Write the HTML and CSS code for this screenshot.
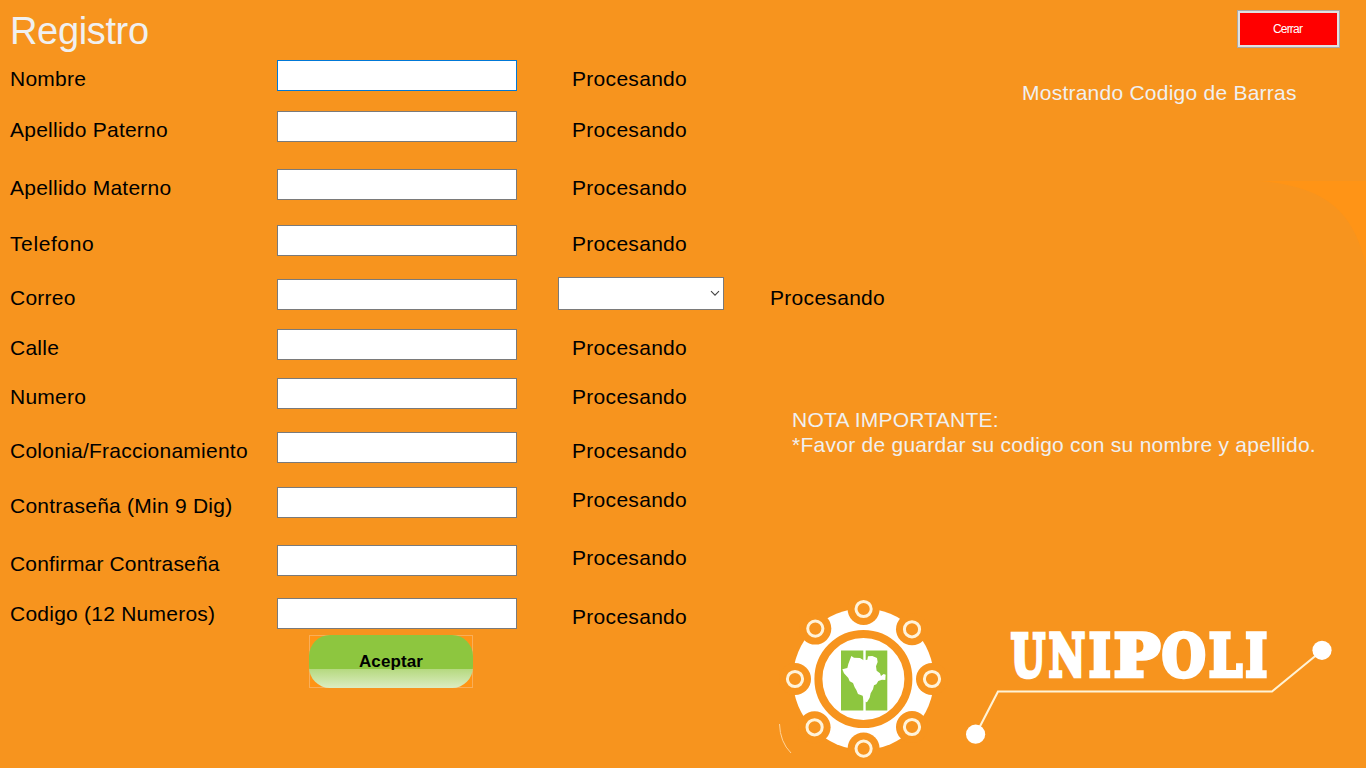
FILE: index.html
```html
<!DOCTYPE html>
<html lang="es">
<head>
<meta charset="utf-8">
<title>Registro</title>
<link rel="stylesheet" href="styles.css">
</head>
<body>
<main class="page">
  <form class="form">
    <h1 class="title">Registro</h1>
    <div class="row h51"><label>Nombre</label><input class="field focused" type="text"><span class="status">Procesando</span></div>
    <div class="row h58"><label>Apellido Paterno</label><input class="field" type="text"><span class="status">Procesando</span></div>
    <div class="row h56"><label>Apellido Materno</label><input class="field" type="text"><span class="status">Procesando</span></div>
    <div class="row h54"><label class="wide">Telefono</label><input class="field" type="text"><span class="status">Procesando</span></div>
    <div class="row h50"><label>Correo</label><input class="field" type="text">
      <div class="combo"><svg width="10" height="7" viewBox="0 0 10 7"><path d="M1 1.2l4 4 4-4" fill="none" stroke="#444" stroke-width="1.1"/></svg></div>
      <span class="status mail">Procesando</span></div>
    <div class="row h49"><label>Calle</label><input class="field" type="text"><span class="status">Procesando</span></div>
    <div class="row h54"><label>Numero</label><input class="field" type="text"><span class="status">Procesando</span></div>
    <div class="row h55"><label>Colonia/Fraccionamiento</label><input class="field" type="text"><span class="status">Procesando</span></div>
    <div class="row h58"><label>Contraseña (Min 9 Dig)</label><input class="field" type="text"><span class="status raised">Procesando</span></div>
    <div class="row h53"><label class="tight">Confirmar Contraseña</label><input class="field" type="text"><span class="status raised">Procesando</span></div>
    <div class="row h37"><label class="code">Codigo (12 Numeros)</label><input class="field" type="text"><span class="status">Procesando</span></div>
    <button class="accept" type="button"><span class="pill">Aceptar</span></button>
  </form>
  <aside class="side">
    <button class="close" type="button">Cerrar</button>
    <p class="barcode">Mostrando Codigo de Barras</p>
    <svg class="curve" width="106" height="86" viewBox="1260 180 106 86"><path d="M1260 181H1366V266C1354 213 1328 187 1260 181Z" fill="#ff9416"/></svg>
    <p class="note">NOTA IMPORTANTE:<br><span class="favor">*Favor de guardar su codigo con su nombre y apellido.</span></p>
    <svg class="logo" width="596" height="178" viewBox="770 590 596 178">
      <circle cx="863.4" cy="679" r="70.5" fill="#fff"/>
      <g fill="#f7941e">
        <circle cx="863.6" cy="609" r="16"/><circle cx="912" cy="629.3" r="16"/><circle cx="932" cy="679" r="16"/><circle cx="912" cy="727" r="16"/>
        <circle cx="863.6" cy="748.6" r="16"/><circle cx="814.6" cy="727.3" r="16"/><circle cx="795" cy="679" r="16"/><circle cx="815.3" cy="628.6" r="16"/>
      </g>
      <g fill="none" stroke="#fff3da" stroke-width="3">
        <circle cx="863.6" cy="609" r="7.6"/><circle cx="912" cy="629.3" r="7.6"/><circle cx="932" cy="679" r="7.6"/><circle cx="912" cy="727" r="7.6"/>
        <circle cx="863.6" cy="748.6" r="7.6"/><circle cx="814.6" cy="727.3" r="7.6"/><circle cx="795" cy="679" r="7.6"/><circle cx="815.3" cy="628.6" r="7.6"/>
      </g>
      <circle cx="863.4" cy="679" r="45" fill="#fff" stroke="#f7941e" stroke-width="8"/>
      <path d="M841 650.5h22.3v60H841zM865.7 650.5h21.6v60h-21.6z" fill="#8dc63f"/>
      <path transform="translate(770 590) scale(.3333)" fill="#fff" d="M217 238L232 234 235 222 244 198 252 203 270 204 281 211 292 209 294 199 307 198 321 204 323 216 318 229 320 242 330 250 333 258 341 252 347 254 346 270 336 269 325 273 319 283 312 286 309 298 302 310 299 323 291 337 282 334 278 317 264 312 259 300 254 292 249 279 239 274 235 264 222 250Z"/>
      <path d="M779.5 724q.5 18 11.5 29" fill="none" stroke="#ffd49a"/>
      <text class="brand" y="675.8"><tspan x="1011" textLength="34" lengthAdjust="spacingAndGlyphs">U</tspan><tspan x="1049" textLength="36" lengthAdjust="spacingAndGlyphs">N</tspan><tspan x="1089" textLength="21.500" lengthAdjust="spacingAndGlyphs">I</tspan><tspan x="1114" textLength="46" lengthAdjust="spacingAndGlyphs">P</tspan><tspan x="1162" textLength="43.500" lengthAdjust="spacingAndGlyphs">O</tspan><tspan x="1209" textLength="33" lengthAdjust="spacingAndGlyphs">L</tspan><tspan x="1245.500" textLength="21.500" lengthAdjust="spacingAndGlyphs">I</tspan></text>
      <path d="M976 734L998 691.5H1272L1322 650.500" fill="none" stroke="#fff3d6" stroke-width="2.1"/>
      <circle cx="975.6" cy="734.2" r="9.6" fill="#fff"/><circle cx="1322" cy="650.3" r="9.6" fill="#fff"/>
    </svg>
  </aside>
</main>
</body>
</html>
```
FILE: styles.css
```css
* { box-sizing: border-box; }
body { margin: 0; background: #f7941e; color: #000; font: 21px/24px "Liberation Sans", Arial, sans-serif; letter-spacing: .24px; overflow: hidden; }
.page { display: grid; grid-template-columns: 770px 596px; width: 1366px; height: 768px; }
.title { margin: 0; height: 60px; padding: 8px 0 0 10px; font-size: 38px; line-height: 46px; font-weight: 400; color: #f0f0f0; letter-spacing: -.35px; }
.row { display: flex; align-items: flex-start; padding-left: 10px; white-space: nowrap; }
.row label { flex: 0 0 267px; padding-top: 7px; }
.row label.code { padding-top: 4px; }
.row label.wide { letter-spacing: .6px; }
.row label.tight { letter-spacing: .15px; }
.h37 { height: 37px; } .h49 { height: 49px; } .h50 { height: 50px; } .h51 { height: 51px; } .h53 { height: 53px; }
.h54 { height: 54px; } .h55 { height: 55px; } .h56 { height: 56px; } .h58 { height: 58px; }
.field { flex: 0 0 240px; width: 240px; min-width: 0; height: 31px; padding: 2px 4px; border: 1px solid #7a7a7a; border-radius: 0; background: #fff; outline: none; font: inherit; }
.focused { border-color: #0078d7; }
.status { margin-left: 55px; padding-top: 7px; letter-spacing: .3px; }
.raised { padding-top: 1px; }
.combo { display: flex; flex: 0 0 166px; justify-content: flex-end; align-items: center; height: 33px; margin: -2px 0 0 41px; padding-right: 3px; background: #fff; border: 1px solid #7a7a7a; }
.mail { margin-left: 46px; }
.accept { display: block; width: 164px; height: 53px; margin: 0 0 0 309px; padding: 0; border: 1px solid #f9ae58; background: #ff9416; }
.pill { display: block; height: 53px; margin: -1px; border-radius: 21px; background: linear-gradient(#8dc63f 0 34px, #b5d97f 34px, #dcedc2 53px); font: bold 17px/53px "Liberation Sans", Arial, sans-serif; letter-spacing: .1px; color: #000; }
.side { display: flex; flex-direction: column; align-items: flex-start; color: #f0f0f0; white-space: nowrap; }
.close { width: 103px; height: 38px; margin: 10px 0 0 467px; padding: 0 2px 0 0; border: 1px solid #a9a9a9; box-shadow: inset 0 0 0 2px #e1e1e1; background: #f00; color: #fff; font: 12px "Liberation Sans", Arial, sans-serif; letter-spacing: -.8px; }
.barcode { margin: 33px 0 0 252px; }
.curve { margin: 75px 0 0 490px; }
.note { margin: 141px 0 0 22px; line-height: 25px; }
.favor { letter-spacing: .26px; }
.logo { margin-top: 133px; flex: none; }
.brand { font: bold 57px "DejaVu Serif", serif; letter-spacing: 0; fill: #fff; stroke: #fff; stroke-width: 4.4; }
```
